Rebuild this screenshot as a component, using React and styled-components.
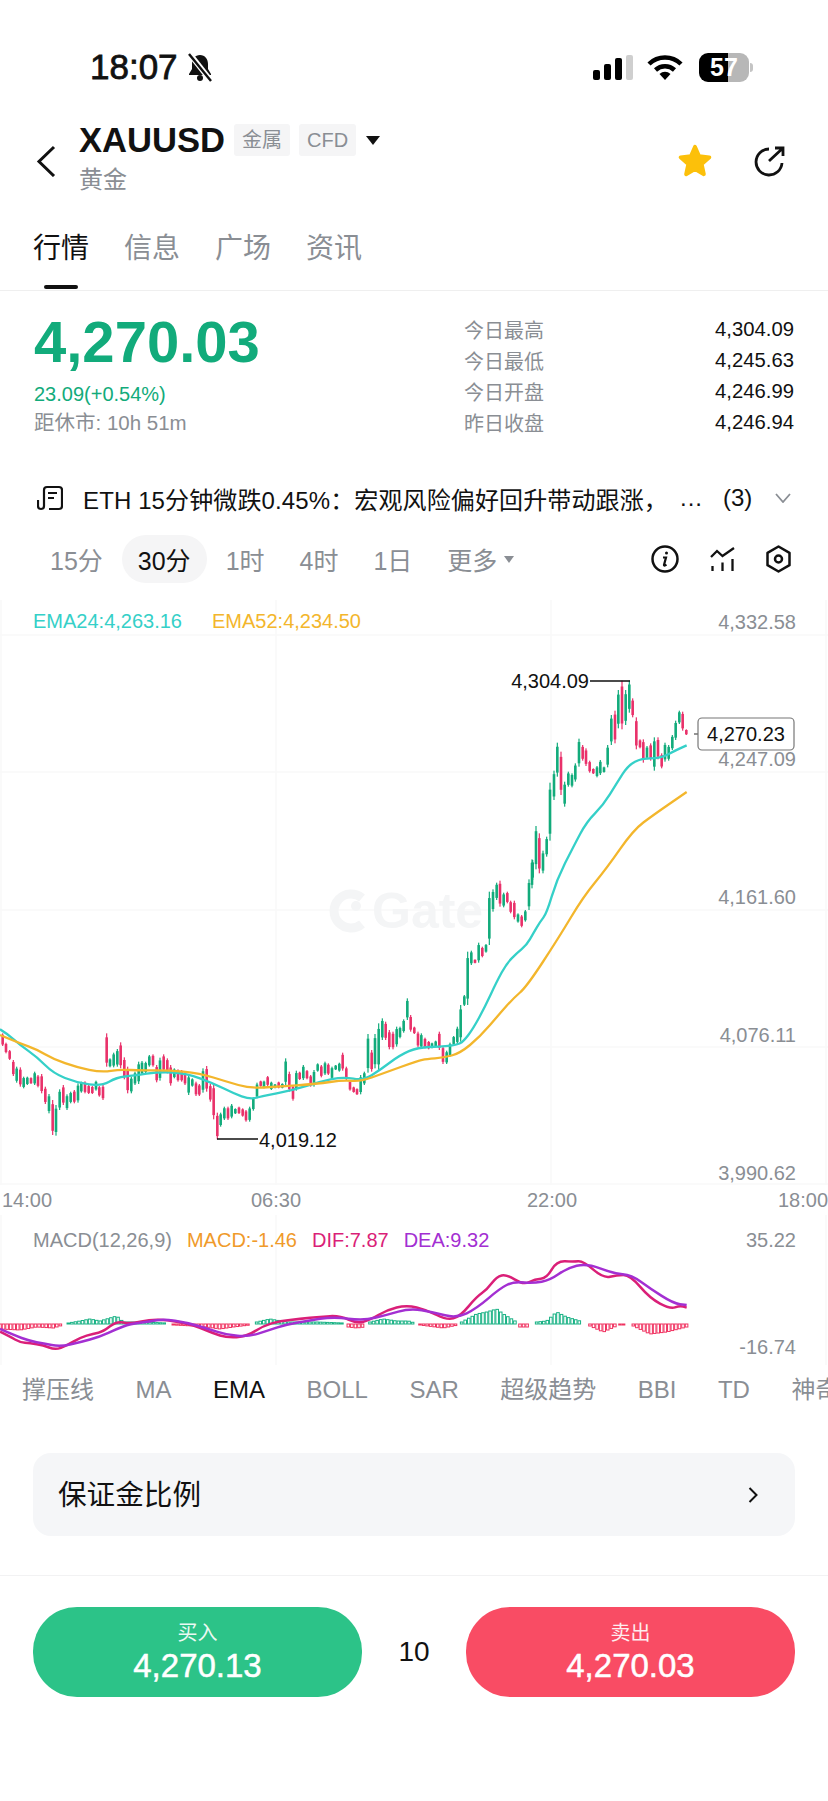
import React from "react";
import styled, { createGlobalStyle } from "styled-components";

const GREEN = "#12ab7b";
const RED = "#e9316a";
const TEAL = "#35d0c8";
const ORANGE = "#f3b62c";
const PINK = "#da1f78";
const PURPLE = "#a32fd2";
const GRAY = "#8a8e94";

const GlobalStyle = createGlobalStyle`
  html, body {
    margin: 0;
    padding: 0;
    background: #fff;
  }
  * {
    box-sizing: border-box;
  }
  body {
    font-family: "Liberation Sans", "Noto Sans CJK SC", sans-serif;
    color: #111;
  }
`;

const Page = styled.div`
  width: 828px;
  height: 1801px;
  overflow: hidden;
  background: #fff;
`;

const StatusBar = styled.div`
  height: 110px;
  padding: 50px 79px 0 90px;
  display: flex;
  align-items: flex-start;
`;

const Clock = styled.div`
  font-family: "Liberation Sans", sans-serif;
  font-size: 35px;
  line-height: 34px;
  font-weight: 400;
  -webkit-text-stroke: 0.8px #111;
`;

const BellIcon = styled.svg`
  width: 28px;
  height: 30px;
  margin-left: 8px;
  margin-top: 2px;
`;

const StatusRight = styled.div`
  margin-left: auto;
  display: flex;
  align-items: center;
  height: 34px;
`;

const SignalBars = styled.div`
  display: flex;
  align-items: flex-end;
  gap: 4px;
  height: 25px;
`;

const SignalBar = styled.span`
  width: 7px;
  height: ${(p) => p.$h}px;
  border-radius: 2px;
  background: ${(p) => (p.$off ? "#cfcfcf" : "#000")};
`;

const WifiIcon = styled.svg`
  width: 36px;
  height: 25px;
  margin-left: 14px;
`;

const Battery = styled.div`
  position: relative;
  width: 50px;
  height: 29px;
  margin-left: 16px;
  border-radius: 9px;
  background: linear-gradient(90deg, #000 58%, #b7b7b7 58%);
  color: #fff;
  font-size: 25px;
  font-weight: 700;
  line-height: 29px;
  text-align: center;

  &::after {
    content: "";
    position: absolute;
    right: -4px;
    top: 10px;
    width: 3px;
    height: 9px;
    border-radius: 0 3px 3px 0;
    background: #c4c4c4;
  }
`;

const Header = styled.div`
  height: 110px;
  padding: 14px 43px 0 36px;
  display: flex;
  align-items: flex-start;
`;

const BackIcon = styled.svg`
  width: 20px;
  height: 32px;
  margin-top: 21px;
`;

const TitleBlock = styled.div`
  margin-left: 23px;
`;

const TitleRow = styled.div`
  display: flex;
  align-items: center;
  height: 32px;
`;

const Symbol = styled.div`
  font-size: 34.6px;
  font-weight: 700;
  line-height: 32px;
`;

const Tag = styled.span`
  height: 32px;
  padding: 0 8px;
  margin-left: 9px;
  border-radius: 3px;
  background: #f5f5f6;
  color: ${GRAY};
  font-size: 20px;
  line-height: 32px;
`;

const Caret = styled.span`
  display: block;
  width: 0;
  height: 0;
  margin-left: ${(p) => p.$ml}px;
  border-left: ${(p) => p.$size}px solid transparent;
  border-right: ${(p) => p.$size}px solid transparent;
  border-top: ${(p) => p.$size * 1.3}px solid ${(p) => p.$color};
`;

const SubTitle = styled.div`
  margin-top: 10px;
  color: ${GRAY};
  font-size: 24px;
  line-height: 28px;
`;

const HeaderIcons = styled.div`
  margin-left: auto;
  margin-top: 20px;
  display: flex;
  align-items: center;
  gap: 39px;
`;

const Tabs = styled.div`
  height: 71px;
  padding-left: 33px;
  display: flex;
  gap: 35px;
  border-bottom: 1px solid #efefef;
`;

const Tab = styled.div`
  padding-top: 9px;
  color: ${(p) => (p.$active ? "#111" : GRAY)};
  font-size: 28px;
  line-height: 40px;

  &::after {
    content: "";
    display: ${(p) => (p.$active ? "block" : "none")};
    width: 34px;
    height: 4px;
    margin: 16px auto 0;
    border-radius: 2px;
    background: #111;
  }
`;

const Quote = styled.div`
  height: 179px;
  padding: 21px 34px 0;
  display: flex;
  justify-content: space-between;
`;

const LastPrice = styled.div`
  color: ${GREEN};
  font-size: 58px;
  font-weight: 700;
  line-height: 60px;
`;

const Change = styled.div`
  margin-top: 8px;
  color: ${GREEN};
  font-size: 20px;
  line-height: 28px;
`;

const Countdown = styled.div`
  margin-top: 1px;
  color: ${GRAY};
  font-size: 20.5px;
  line-height: 28px;
`;

const Stats = styled.div`
  width: 330px;
  padding-top: 2px;
`;

const StatRow = styled.div`
  height: 31px;
  display: flex;
  align-items: center;
  justify-content: space-between;
`;

const StatLabel = styled.span`
  color: ${GRAY};
  font-size: 20px;
`;

const StatValue = styled.span`
  font-size: 20.3px;
`;

const News = styled.div`
  height: 56px;
  padding-left: 37px;
  display: flex;
  align-items: center;
  font-size: 24px;
`;

const NewsIcon = styled.svg`
  width: 26px;
  height: 26px;
  flex: none;
`;

const NewsText = styled.div`
  width: 597px;
  margin-left: 20px;
  white-space: nowrap;
  overflow: hidden;
  letter-spacing: 0.12px;
`;

const NewsDots = styled.span`
  width: 43px;
  letter-spacing: 1px;
`;

const NewsCount = styled.span`
  width: 52px;
`;

const TimeframeBar = styled.div`
  height: 48px;
  margin: 9px 0 17px;
  padding: 0 37px 0 34px;
  display: flex;
  align-items: center;
  gap: 3px;
`;

const Timeframe = styled.div`
  height: 48px;
  padding: 0 16px;
  display: flex;
  align-items: center;
  gap: 7px;
  border-radius: 24px;
  background: ${(p) => (p.$active ? "#f5f5f6" : "transparent")};
  color: ${(p) => (p.$active ? "#111" : GRAY)};
  font-size: 25px;
`;

const ToolIcons = styled.div`
  margin-left: auto;
  display: flex;
  align-items: center;
  gap: 31px;
`;

const ChartBox = styled.div`
  position: relative;
  height: ${(p) => p.$h}px;
`;

const ChartSvg = styled.svg`
  display: block;
  width: 828px;
  height: 100%;
`;

const Legend = styled.div`
  position: absolute;
  left: 33px;
  top: ${(p) => p.$top}px;
  display: flex;
  gap: ${(p) => p.$gap}px;
  font-size: 20px;
  line-height: 28px;
`;

const LegendItem = styled.span`
  color: ${(p) => p.$color};
`;

const AxisText = styled.text`
  font-size: 20px;
  fill: ${(p) => p.$fill || GRAY};
  text-anchor: ${(p) => p.$anchor || "end"};
`;

const Watermark = styled.text`
  font-size: 50px;
  font-weight: 700;
  fill: #f4f5f6;
`;

const TimeAxis = styled.div`
  height: 30px;
  padding-left: 2px;
  display: grid;
  grid-template-columns: 249px 276px 251px 50px;
  color: ${GRAY};
  font-size: 20px;
  line-height: 30px;
`;

const IndicatorBar = styled.div`
  height: 50px;
  padding-left: 22px;
  display: flex;
  align-items: center;
  gap: 41.5px;
  overflow: hidden;
  white-space: nowrap;
`;

const Indicator = styled.span`
  flex: none;
  color: ${(p) => (p.$active ? "#111" : GRAY)};
  font-size: 24px;
  line-height: 30px;
`;

const MarginCard = styled.div`
  height: 83px;
  margin: 38px 33px 0;
  padding: 0 37px 0 25px;
  display: flex;
  align-items: center;
  justify-content: space-between;
  border-radius: 18px;
  background: #f5f6f8;
  font-size: 28.6px;
  line-height: 40px;
`;

const Divider = styled.div`
  height: 1px;
  margin-top: 39px;
  background: #f2f2f3;
`;

const TradeBar = styled.div`
  padding: 31px 33px 0;
  display: flex;
  align-items: center;
`;

const TradeButton = styled.div`
  width: 329px;
  height: 90px;
  padding-top: 12px;
  border-radius: 44px;
  background: ${(p) => p.$bg};
  color: #fff;
  text-align: center;
`;

const TradeLabel = styled.div`
  font-size: 20px;
  line-height: 28px;
  opacity: 0.9;
`;

const TradeValue = styled.div`
  font-size: 33px;
  font-weight: 400;
  line-height: 38px;
  -webkit-text-stroke: 0.5px #fff;
`;

const Leverage = styled.div`
  flex: 1;
  text-align: center;
  font-size: 28px;
`;

// candles read off the chart: [x, top, bottom, r/g], in crop units (crop px = page px * 3)
const part1 = `8,220,258,r 18,248,280,r 29,270,300,r 40,300,348,r 50,320,368,g 61,322,380,r 71,350,385,g 82,350,375,g 93,352,372,r 104,335,375,g 114,345,382,r 125,342,400,r 136,380,432,r 147,402,460,g 158,420,525,r 168,435,527,g 179,388,450,g 190,375,435,r 201,403,450,g 212,395,430,g 223,390,430,r 234,370,428,g 244,365,398,g 255,364,400,r 266,375,402,r 277,378,402,r 288,362,392,g 298,378,410,r 309,375,420,r 320,220,320,r 330,295,322,g 341,278,322,g 352,267,320,g 362,247,325,r 373,292,358,r 383,320,400,r 394,350,400,g 405,335,375,g 416,305,372,g 426,303,345,g 437,305,340,g 448,285,320,g 459,283,320,r 470,315,367,r 480,293,362,g 491,283,335,r 502,295,340,r 512,315,377,r 523,325,355,g 534,328,365,r 545,330,365,r 555,335,375,r 566,345,405,g 577,355,380,g 588,365,408,r 598,372,408,r 609,325,398,g 620,318,395,r 631,372,425,r 641,372,478,r 652,458,538,r 662,458,500,g 673,440,480,g 684,440,480,r 695,432,475,g 706,445,462,g 717,440,462,r 728,445,470,r 738,450,485,r 749,440,485,g 760,412,452,g 771,368,415,g 782,362,380,r 792,362,385,g 803,348,378,r 814,365,390,g 825,372,385,g 836,365,385,r 847,370,385,g 857,295,375,g 868,335,395,r 879,375,422,r 889,332,392,g 899,335,360,r 910,315,360,g 921,330,358,r 932,345,380,r 942,330,380,g 953,310,335,g 964,315,352,r 975,305,345,g 985,310,345,r 996,320,358,g 1007,315,330,g 1018,308,335,g 1028,278,332,r 1039,320,362,r 1050,362,392,r 1061,380,398,r 1071,385,405,r 1082,345,403,g 1093,335,375,g 1104,222,338,g 1115,270,335,r 1125,222,325,g 1136,190,330,g 1147,175,240,g 1157,185,240,r 1168,210,268,r 1179,215,268,r 1190,200,260,g 1200,200,235,g 1211,178,218,g 1222,115,180,g 1232,165,215,r 1243,200,222,r 1254,215,262,r`;
const part2 = `364,520,565,g 375,533,565,r 386,543,568,r 396,548,565,g 407,542,562,g 418,515,570,r 429,558,612,r 440,572,612,g 450,548,590,g 461,528,555,g 472,500,552,g 482,435,545,g 493,405,438,g 503,275,435,g 514,272,315,g 525,298,310,r 536,248,308,g 547,260,292,r 558,252,278,g 568,95,255,g 579,88,155,g 590,68,120,g 600,62,140,r 611,98,142,g 622,95,130,r 632,122,160,r 643,122,178,r 654,160,188,g 665,165,202,r 676,150,185,g 687,58,150,g 698,0,60,g`;
const part3 = `336,658,745,g 348,558,688,g 358,580,700,r 369,632,700,g 380,590,650,g 390,428,602,g 402,392,480,g 412,308,410,g 423,335,465,r 434,425,500,g 445,395,440,g 456,400,442,g 466,370,425,g 477,296,380,g 488,315,362,r 498,325,378,r 509,362,398,r 520,385,402,r 531,378,412,g 541,360,405,g 552,380,398,g 563,315,382,g 574,225,315,g 585,212,310,r 595,150,265,g 606,122,268,r 617,150,255,g 628,122,218,g 638,175,232,r 649,232,328,r 660,298,325,r 670,298,368,r 681,318,358,g 692,310,362,r 703,292,392,g 714,292,358,r 725,340,385,r 735,308,365,g 746,315,362,g 757,285,330,g 767,242,300,g 778,212,252,g 788,215,272,r 799,268,285,r`;

const readCandles = (text, ox, oy) =>
  text.split(" ").map((item) => {
    const [x, top, bot, c] = item.split(",");
    return { x: ox + x / 3, top: oy + top / 3, bot: oy + bot / 3, c };
  });

const candles = [
  ...readCandles(part1, 0, 960),
  ...readCandles(part2, 300, 860),
  ...readCandles(part3, 420, 640),
];

const toPage = (pts, ox, oy) => pts.map(([x, y]) => [ox + x / 3, oy + y / 3]);

// smooth line through the midpoints
const smooth = (pts) => {
  let d = `M${pts[0][0]} ${pts[0][1]}`;
  for (let i = 1; i < pts.length - 1; i++) {
    const mx = (pts[i][0] + pts[i + 1][0]) / 2;
    const my = (pts[i][1] + pts[i + 1][1]) / 2;
    d += `Q${pts[i][0]} ${pts[i][1]} ${mx} ${my}`;
  }
  const last = pts[pts.length - 1];
  return d + `L${last[0]} ${last[1]}`;
};

const ema24 = smooth([
  ...toPage([[0,208],[20,220],[60,255],[110,290],[160,340],[230,368],[305,378],[350,352],[400,347],[480,335],[560,340],[640,370],[700,400],[750,418],[780,410],[880,390],[960,365],[1030,350],[1090,362],[1140,330],[1200,285],[1254,262]], 0, 960),
  ...toPage([[420,560],[470,555],[490,545],[520,505],[555,440],[590,365],[620,310],[650,280],[680,255],[700,220]], 300, 860),
  ...toPage([[360,846],[380,820],[410,720],[460,620],[500,545],[550,495],[590,430],[625,375],[665,355],[720,355],[770,330],[800,316]], 420, 640),
]);

const ema52 = smooth([
  ...toPage([[0,225],[60,250],[110,268],[160,297],[230,322],[305,337],[360,328],[420,332],[500,330],[600,340],[680,365],[750,385],[830,380],[950,372],[1030,360],[1080,365],[1150,340],[1254,302]], 0, 960),
  ...toPage([[380,597],[430,593],[480,580],[540,530],[600,460],[640,415],[680,380]], 300, 860),
  ...toPage([[415,895],[490,770],[560,685],[640,570],[700,525],[800,456]], 420, 640),
]);

const dif = smooth([
  ...toPage([[0,230],[30,245],[60,262],[90,265],[130,270],[165,285],[200,272],[240,248],[280,236],[310,230],[350,198],[390,207],[450,194],[500,195],[560,205],[600,218],[640,235],[680,248],[740,245],[790,212],[840,198],[900,192],[960,185],[1020,182]], 0, 1255),
  ...toPage([[50,205],[90,195],[140,165],[200,150],[260,165],[320,195],[360,185],[410,125],[440,105],[470,65],[500,58],[550,90],[585,72],[620,70],[650,18],[700,20],[730,18],[790,70],[830,60],[870,60],[930,130],[990,162],[1020,152],[1040,158]], 340, 1255),
]);

const dea = smooth([
  ...toPage([[0,222],[40,240],[90,258],[130,265],[180,275],[240,262],[300,245],[350,222],[390,207],[450,200],[490,192],[560,203],[620,220],[680,240],[745,245],[800,228],[860,208],[920,198],[1000,185]], 0, 1255),
  ...toPage([[70,197],[140,180],[210,160],[280,172],[350,190],[410,160],[480,100],[520,80],[580,85],[630,75],[680,40],[740,25],[820,55],[875,60],[930,100],[1000,145],[1040,150]], 340, 1255),
]);

// histogram outline: each run is knots [x, height] in crop units
const runsLeft = [
  [[0,-5],[60,-6],[110,-3],[160,-4],[190,-1]],
  [[205,1],[240,3],[270,5],[300,3],[330,6],[350,8],[370,2],[430,2],[500,1]],
  [[520,-1],[580,-2],[620,-3],[660,-5],[700,-3],[750,-1]],
  [[770,2],[810,5],[860,2],[950,2],[1030,1]],
];
const runsRight = [
  [[25,-3],[50,-4],[75,-3]],
  [[90,2],[130,5],[170,3],[205,3],[225,1]],
  [[240,-1],[310,-4],[355,-1]],
  [[365,2],[410,10],[440,12],[470,15],[490,10],[525,3]],
  [[540,-3],[565,-3]],
  [[590,2],[620,3],[650,12],[680,7],[720,3]],
  [[750,-2],[790,-8],[830,-2]],
  [[840,-1],[860,-1]],
  [[880,-2],[930,-10],[980,-8],[1040,-3]],
];

const readBars = (runs, ox) => {
  const bars = [];
  runs.forEach((knots) => {
    for (let z = knots[0][0]; z <= knots[knots.length - 1][0]; z += 10.65) {
      let k = 0;
      while (k < knots.length - 2 && z > knots[k + 1][0]) k++;
      const [x0, a0] = knots[k];
      const [x1, a1] = knots[k + 1];
      bars.push({ x: ox + z / 3, a: a0 + ((a1 - a0) * (z - x0)) / (x1 - x0) });
    }
  });
  return bars;
};

const bars = [...readBars(runsLeft, 0), ...readBars(runsRight, 340)];

const GridLines = ({ top, bottom, rows }) => (
  <g stroke="#f8f8f9" strokeWidth="1.5">
    {rows.map((y) => (
      <line key={y} x1="0" x2="828" y1={y} y2={y} />
    ))}
    {[1, 276, 551, 826].map((x) => (
      <line key={x} x1={x} x2={x} y1={top} y2={bottom} />
    ))}
  </g>
);

const CandleChart = () => (
  <ChartBox $h={585}>
    <ChartSvg viewBox="0 600 828 585">
      <GridLines top={600} bottom={1185} rows={[635, 772, 910, 1047, 1184]} />
      <path
        d="M362 898A17 17 0 1 0 362 924"
        fill="none"
        stroke="#f4f5f6"
        strokeWidth="9"
      />
      <circle cx="356" cy="906" r="5" fill="#f4f5f6" />
      <Watermark x="372" y="928">Gate</Watermark>
      {candles.map((c, i) => {
        const fill = c.c === "r" ? RED : GREEN;
        const h = c.bot - c.top;
        return (
          <g key={i} fill={fill}>
            <rect x={c.x - 0.6} y={c.top} width="1.2" height={h} />
            <rect x={c.x - 1.3} y={c.top + h * 0.12} width="2.6" height={h * 0.76} />
          </g>
        );
      })}
      <path d={ema24} fill="none" stroke={TEAL} strokeWidth="2.3" />
      <path d={ema52} fill="none" stroke={ORANGE} strokeWidth="2.3" />
      <path d="M590 681H630M217 1139H258" stroke="#111" strokeWidth="1.4" fill="none" />
      <AxisText x="589" y="688" $fill="#111">4,304.09</AxisText>
      <AxisText x="259" y="1147" $fill="#111" $anchor="start">4,019.12</AxisText>
      <AxisText x="796" y="629">4,332.58</AxisText>
      <AxisText x="796" y="766">4,247.09</AxisText>
      <AxisText x="796" y="904">4,161.60</AxisText>
      <AxisText x="796" y="1042">4,076.11</AxisText>
      <AxisText x="796" y="1180">3,990.62</AxisText>
      <path d="M694 734H698" stroke="#666" strokeWidth="1.4" />
      <rect x="698" y="718" width="96" height="32" rx="4" fill="#fff" stroke="#777" strokeWidth="1.2" />
      <AxisText x="746" y="741" $fill="#111" $anchor="middle">4,270.23</AxisText>
    </ChartSvg>
    <Legend $top={7} $gap={30}>
      <LegendItem $color={TEAL}>EMA24:4,263.16</LegendItem>
      <LegendItem $color={ORANGE}>EMA52:4,234.50</LegendItem>
    </Legend>
  </ChartBox>
);

const MacdChart = () => (
  <ChartBox $h={150}>
    <ChartSvg viewBox="0 1215 828 150">
      <GridLines top={1215} bottom={1365} rows={[]} />
      {bars.map((b, i) => {
        const h = Math.max(Math.abs(b.a), 1);
        const stroke = b.a > 0 ? "#16b183" : "#f0305f";
        return (
          <rect
            key={i}
            x={b.x - 1.3}
            y={b.a > 0 ? 1324 - h : 1324}
            width="2.6"
            height={h}
            fill="#fff"
            stroke={stroke}
            strokeWidth="1"
          />
        );
      })}
      <path d={dif} fill="none" stroke={PINK} strokeWidth="2.5" />
      <path d={dea} fill="none" stroke={PURPLE} strokeWidth="2.5" />
      <AxisText x="796" y="1247">35.22</AxisText>
      <AxisText x="796" y="1354">-16.74</AxisText>
    </ChartSvg>
    <Legend $top={11} $gap={15}>
      <LegendItem $color={GRAY}>MACD(12,26,9)</LegendItem>
      <LegendItem $color="#f09a2a">MACD:-1.46</LegendItem>
      <LegendItem $color={PINK}>DIF:7.87</LegendItem>
      <LegendItem $color={PURPLE}>DEA:9.32</LegendItem>
    </Legend>
  </ChartBox>
);

const stats = [
  ["今日最高", "4,304.09"],
  ["今日最低", "4,245.63"],
  ["今日开盘", "4,246.99"],
  ["昨日收盘", "4,246.94"],
];

const indicators = ["撑压线", "MA", "EMA", "BOLL", "SAR", "超级趋势", "BBI", "TD", "神奇九转"];

export default function App() {
  return (
    <Page>
      <GlobalStyle />
      <StatusBar>
        <Clock>18:07</Clock>
        <BellIcon viewBox="0 0 28 30">
          <path d="M14 3c-5 0-8 4-8 9v5l-3 5v1h22v-1l-3-5v-5c0-5-3-9-8-9z" fill="#111" />
          <circle cx="14" cy="26" r="3" fill="#111" />
          <path d="M3 1l22 28" stroke="#fff" strokeWidth="5.5" />
          <path d="M3 2l22 27" stroke="#111" strokeWidth="2.4" />
        </BellIcon>
        <StatusRight>
          <SignalBars>
            <SignalBar $h={10} />
            <SignalBar $h={16} />
            <SignalBar $h={22} />
            <SignalBar $h={25} $off />
          </SignalBars>
          <WifiIcon viewBox="0 0 36 25">
            <path d="M2 9A23 23 0 0 1 34 9" fill="none" stroke="#000" strokeWidth="4.5" />
            <path d="M8.5 15A14 14 0 0 1 27.5 15" fill="none" stroke="#000" strokeWidth="4.5" />
            <path d="M18 25L12.5 19A8 8 0 0 1 23.5 19Z" fill="#000" />
          </WifiIcon>
          <Battery>57</Battery>
        </StatusRight>
      </StatusBar>

      <Header>
        <BackIcon viewBox="0 0 20 32">
          <path d="M18 2L3 16.5L18 31" fill="none" stroke="#111" strokeWidth="3" />
        </BackIcon>
        <TitleBlock>
          <TitleRow>
            <Symbol>XAUUSD</Symbol>
            <Tag>金属</Tag>
            <Tag>CFD</Tag>
            <Caret $size={7} $color="#111" $ml={10} />
          </TitleRow>
          <SubTitle>黄金</SubTitle>
        </TitleBlock>
        <HeaderIcons>
          <svg width="38" height="36" viewBox="-20 -19 40 38">
            <path
              d="M0 -16L4.4 -6.07L15.2 -4.94L7.13 2.32L9.4 12.94L0 7.5L-9.4 12.94L-7.13 2.32L-15.2 -4.94L-4.4 -6.07Z"
              fill="#fcc00a"
              stroke="#fcc00a"
              strokeWidth="4"
              strokeLinejoin="round"
            />
          </svg>
          <svg width="32" height="32" viewBox="0 0 32 32" fill="none" stroke="#111" strokeWidth="2.8">
            <path d="M16 3A13 13 0 1 0 29 17" />
            <path d="M16 15L30 2M22 2H30V10" />
          </svg>
        </HeaderIcons>
      </Header>

      <Tabs>
        <Tab $active>行情</Tab>
        <Tab>信息</Tab>
        <Tab>广场</Tab>
        <Tab>资讯</Tab>
      </Tabs>

      <Quote>
        <div>
          <LastPrice>4,270.03</LastPrice>
          <Change>23.09(+0.54%)</Change>
          <Countdown>距休市: 10h 51m</Countdown>
        </div>
        <Stats>
          {stats.map(([label, value]) => (
            <StatRow key={label}>
              <StatLabel>{label}</StatLabel>
              <StatValue>{value}</StatValue>
            </StatRow>
          ))}
        </Stats>
      </Quote>

      <News>
        <NewsIcon viewBox="0 0 26 26" fill="none" stroke="#111" strokeWidth="2.2">
          <path d="M7 21V5a3 3 0 0 1 3-3h12a3 3 0 0 1 3 3v16a3 3 0 0 1-3 3H12" />
          <path d="M1 15v6a3 3 0 0 0 6 0M11 8h9M11 13h6" />
        </NewsIcon>
        <NewsText>ETH 15分钟微跌0.45%：宏观风险偏好回升带动跟涨，</NewsText>
        <NewsDots>...</NewsDots>
        <NewsCount>(3)</NewsCount>
        <svg width="16" height="10" viewBox="0 0 16 10" fill="none" stroke={GRAY} strokeWidth="1.8">
          <path d="M1 1l7 8 7-8" />
        </svg>
      </News>

      <TimeframeBar>
        <Timeframe>15分</Timeframe>
        <Timeframe $active>30分</Timeframe>
        <Timeframe>1时</Timeframe>
        <Timeframe>4时</Timeframe>
        <Timeframe>1日</Timeframe>
        <Timeframe>
          更多
          <Caret $size={5.5} $color={GRAY} $ml={0} />
        </Timeframe>
        <ToolIcons>
          <svg width="28" height="28" viewBox="0 0 28 28" fill="none" stroke="#111" strokeWidth="2.5">
            <circle cx="14" cy="14" r="12.5" />
            <path d="M12 12.5h3l-2 7.5c0 .8.8 .8 2.5-.3" strokeWidth="2.2" />
            <circle cx="15.5" cy="8" r="1.5" fill="#111" stroke="none" />
          </svg>
          <svg width="25" height="24" viewBox="0 0 25 24" fill="none" stroke="#111" strokeWidth="2.3">
            <path d="M1 10l6-6 5.5 5L24 1" />
            <path d="M2.5 24v-5M12.5 24v-8.5M22.5 24V12" />
          </svg>
          <svg width="25" height="28" viewBox="0 0 25 28" fill="none" stroke="#111" strokeWidth="2.5">
            <path d="M12.5 1.500L23.5 7.800V20.200L12.5 26.500L1.500 20.200V7.800Z" strokeLinejoin="round" />
            <circle cx="12.5" cy="14" r="3.5" />
          </svg>
        </ToolIcons>
      </TimeframeBar>

      <CandleChart />

      <TimeAxis>
        <span>14:00</span>
        <span>06:30</span>
        <span>22:00</span>
        <span>18:00</span>
      </TimeAxis>

      <MacdChart />

      <IndicatorBar>
        {indicators.map((name) => (
          <Indicator key={name} $active={name === "EMA"}>
            {name}
          </Indicator>
        ))}
      </IndicatorBar>

      <MarginCard>
        保证金比例
        <svg width="10" height="16" viewBox="0 0 10 16" fill="none" stroke="#111" strokeWidth="2">
          <path d="M1.5 1l7 7-7 7" />
        </svg>
      </MarginCard>

      <Divider />

      <TradeBar>
        <TradeButton $bg="#2cc388">
          <TradeLabel>买入</TradeLabel>
          <TradeValue>4,270.13</TradeValue>
        </TradeButton>
        <Leverage>10</Leverage>
        <TradeButton $bg="#f94c64">
          <TradeLabel>卖出</TradeLabel>
          <TradeValue>4,270.03</TradeValue>
        </TradeButton>
      </TradeBar>
    </Page>
  );
}
